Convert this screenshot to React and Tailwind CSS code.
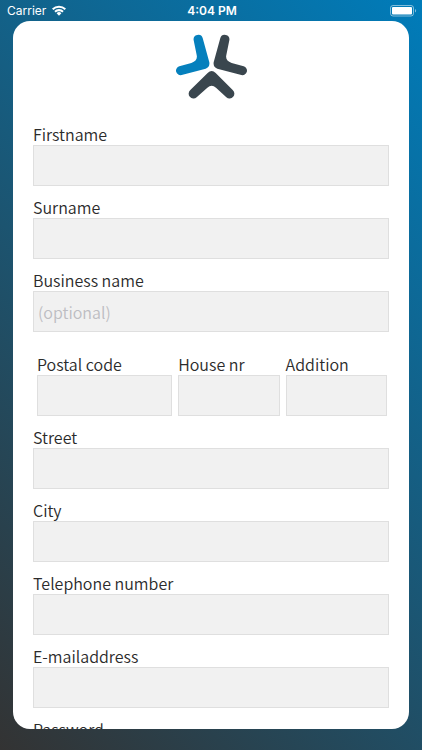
import { useState } from 'react';

// Sign-up form shown on a phone: status bar on top, scrolling card below.

const NAME_FIELDS = [
  { id: 'firstname', label: 'Firstname' },
  { id: 'surname', label: 'Surname' },
  { id: 'business', label: 'Business name', placeholder: '(optional)' },
];

const ADDRESS_ROW = [
  { id: 'postal', label: 'Postal code' },
  { id: 'houseNr', label: 'House nr' },
  { id: 'addition', label: 'Addition' },
];

const CONTACT_FIELDS = [
  { id: 'street', label: 'Street' },
  { id: 'city', label: 'City' },
  { id: 'phone', label: 'Telephone number', type: 'tel' },
  { id: 'email', label: 'E-mailaddress', type: 'email' },
  { id: 'password', label: 'Password', type: 'password' },
];

export default function App() {
  const [values, setValues] = useState({});

  const renderField = (field) => (
    <Field
      key={field.id}
      {...field}
      value={values[field.id] ?? ''}
      onChange={(value) => setValues((v) => ({ ...v, [field.id]: value }))}
    />
  );

  return (
    <div className="flex h-screen flex-col bg-linear-45/srgb from-[#333333] to-[#007cba]">
      <StatusBar />
      <main className="mx-[13px] mb-[21px] min-h-0 flex-1 overflow-y-auto rounded-[17px] bg-white px-5 [scrollbar-width:none]">
        <Logo />
        <form className="mt-[13px] font-['Noto_Sans_CJK_SC',sans-serif] text-[16px] font-[350] text-[#2b2b2b]">
          {NAME_FIELDS.map(renderField)}
          <div className="mt-[11px] grid grid-cols-[4fr_3fr_3fr] gap-[6px] pr-[2px] pl-1">
            {ADDRESS_ROW.map(renderField)}
          </div>
          {CONTACT_FIELDS.map(renderField)}
        </form>
      </main>
    </div>
  );
}

function Field({ id, label, type = 'text', placeholder, value, onChange }) {
  return (
    <div className="min-w-0 pt-[10px]">
      <label htmlFor={id} className="block leading-[22px] whitespace-nowrap">
        {label}
      </label>
      <input
        id={id}
        type={type}
        placeholder={placeholder}
        value={value}
        onChange={(e) => onChange(e.target.value)}
        className="block h-[41px] w-full border border-[#dfdfdf] bg-[#f1f1f1] px-1 outline-none placeholder:text-[#bdbdc2]"
      />
    </div>
  );
}

function StatusBar() {
  return (
    <header className="grid h-[21px] shrink-0 grid-cols-3 items-center pr-[5px] pl-[7px] font-['Inter',sans-serif] text-[12px] leading-5 text-white">
      <div className="flex items-center gap-[6px]">
        <span>Carrier</span>
        <svg viewBox="0 0 14 11" className="h-[11px] w-[14px]" aria-hidden="true">
          <path d="M0 3.6a10 10 0 0 1 14 0l-1.4 1.5a8 8 0 0 0-11.2 0z" fill="currentColor" />
          <path d="M2.3 6a6.7 6.7 0 0 1 9.4 0l-1.4 1.5a4.7 4.7 0 0 0-6.6 0z" fill="currentColor" />
          <path d="M4.6 8.3a3.4 3.4 0 0 1 4.8 0L7 10.8z" fill="currentColor" />
        </svg>
      </div>
      <span className="text-center font-semibold">4:04 PM</span>
      <svg viewBox="0 0 27 12" className="h-3 w-[27px] justify-self-end" aria-hidden="true">
        <rect x="0.5" y="0.5" width="23" height="10.5" rx="2.5" fill="none" stroke="currentColor" strokeOpacity="0.5" />
        <rect x="2" y="2" width="20" height="7.5" rx="1" fill="currentColor" />
        <path d="M25 4v3.6a2 2 0 0 0 0-3.6z" fill="currentColor" fillOpacity="0.5" />
      </svg>
    </header>
  );
}

function Logo() {
  const arm =
    'M101 121A14 14 0 0 1 128 114L148 187Q150 202 137 206L65 225A13 13 0 0 1 58 199L94 189Q114 182 110 165Z';
  return (
    <svg viewBox="45 102 216 198" className="mx-auto mt-[13px] h-[66px] w-[72px]" aria-hidden="true">
      <path d={arm} fill="#0580bd" />
      <path d={arm} fill="#3a464e" transform="translate(309 0) scale(-1 1)" />
      <path
        d="M143 219Q155 207 167 219L218 270A14 14 0 0 1 199 292L168 263Q155 252 142 263L110 292A14 14 0 0 1 91 270Z"
        fill="#3a464e"
      />
    </svg>
  );
}
